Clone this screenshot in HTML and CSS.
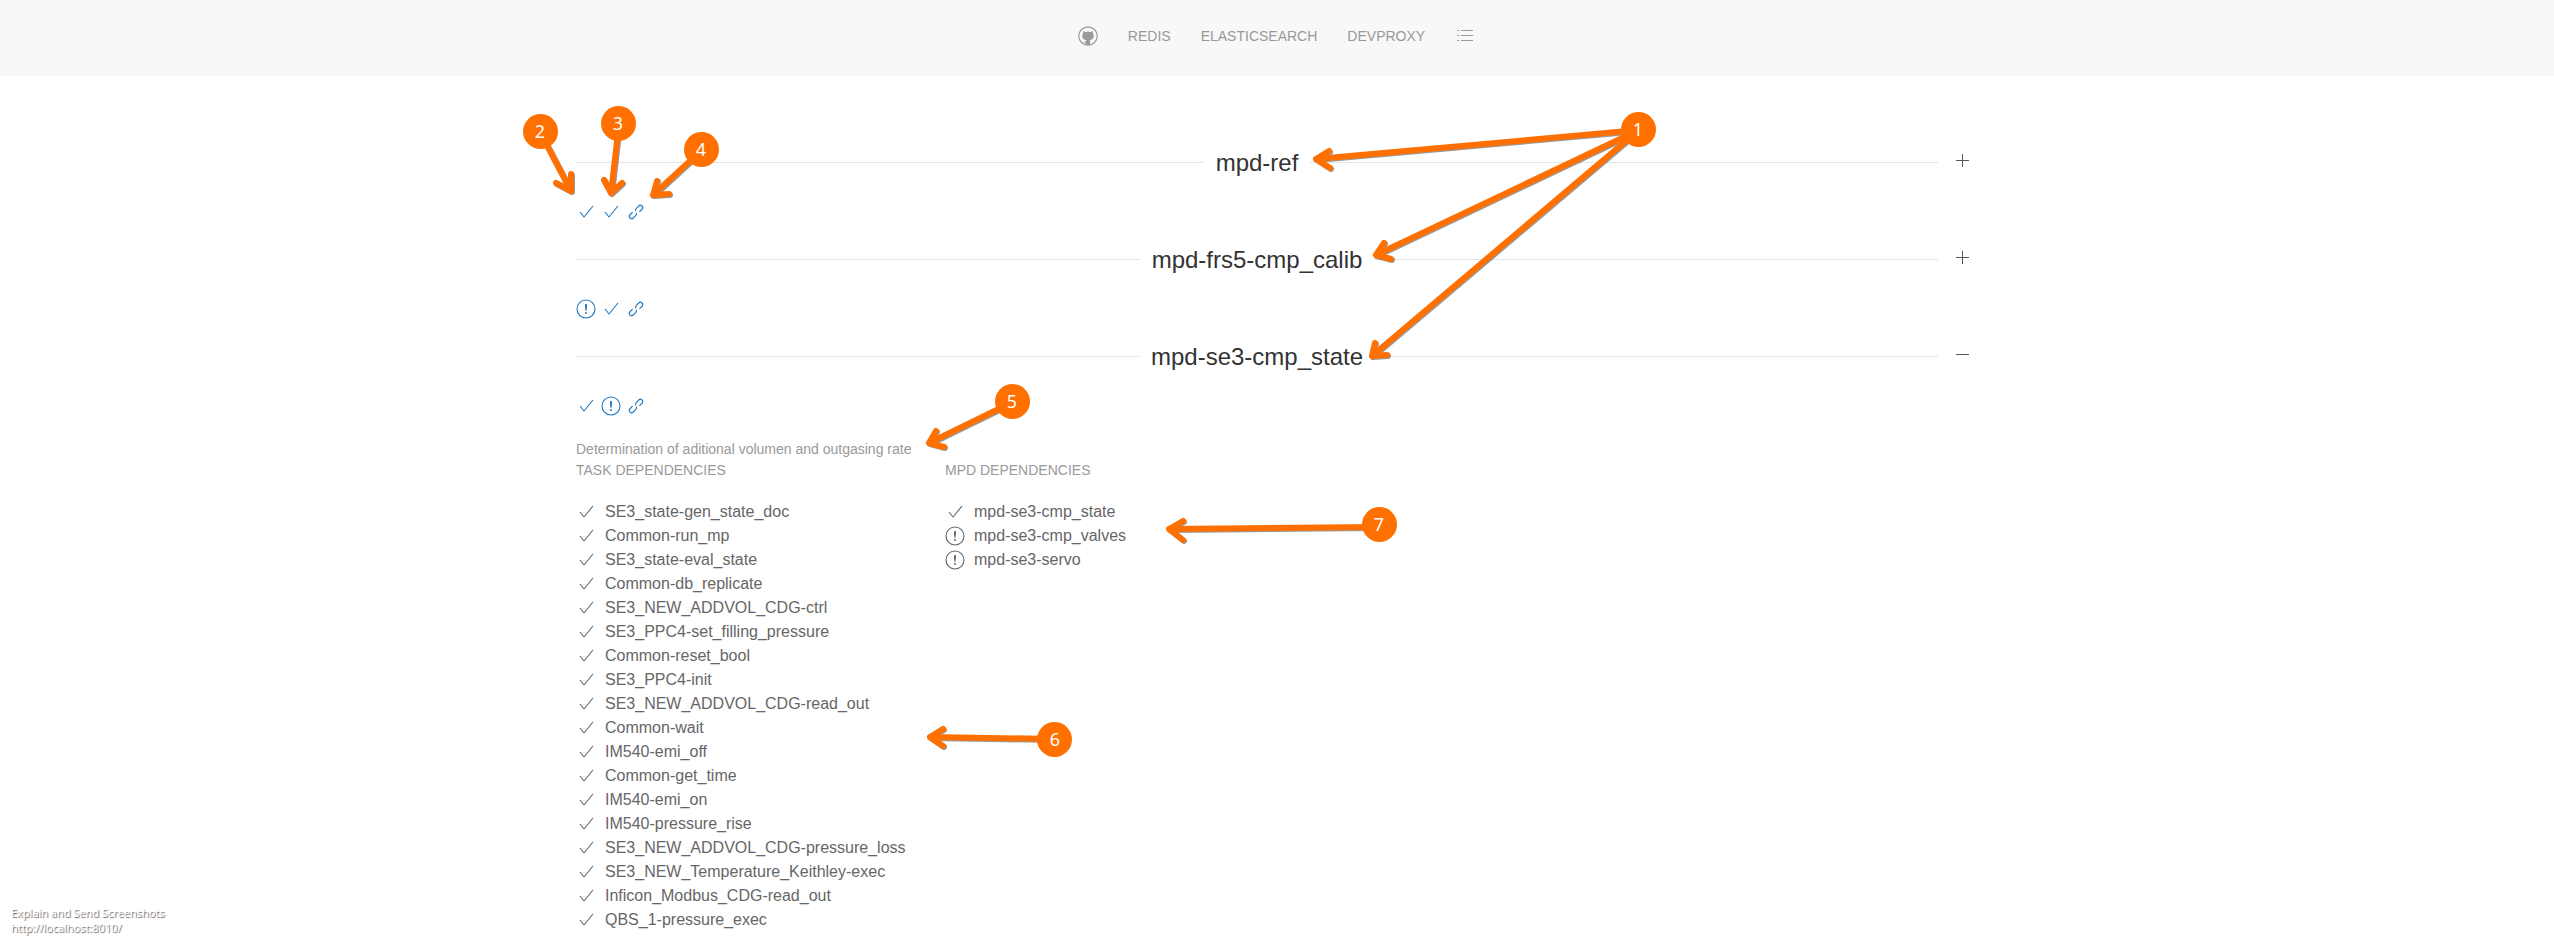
FILE: index.html
```html
<!DOCTYPE html>
<html lang="en">
<head>
<meta charset="utf-8">
<title>Measurement programs</title>
<link rel="stylesheet" href="styles.css">
</head>
<body>
<svg class="defs" aria-hidden="true">
  <symbol id="check" viewBox="0 0 20 20"><polyline fill="none" stroke="currentColor" stroke-width="1.1" points="4,10 8,15 17,4"/></symbol>
  <symbol id="warning" viewBox="0 0 20 20"><circle cx="10" cy="14" r="1" fill="currentColor"/><circle cx="10" cy="10" r="9" fill="none" stroke="currentColor" stroke-width="1.1"/><path fill="currentColor" d="M10.97,7.72 C10.85,9.54 10.56,11.29 10.56,11.29 C10.51,11.87 10.27,12 9.99,12 C9.69,12 9.49,11.87 9.43,11.29 C9.43,11.29 9.16,9.54 9.03,7.72 C8.96,6.54 9.03,6 9.03,6 C9.03,5.45 9.46,5.02 9.99,5 C10.53,5.01 10.97,5.44 10.97,6 C10.97,6 11.04,6.54 10.97,7.72 Z"/></symbol>
  <symbol id="link" viewBox="0 0 20 20"><g fill="none" stroke="currentColor" stroke-width="1.1" transform="rotate(-45 10 10)"><path d="M7.5 7.7H3.8a2.3 2.3 0 0 0 0 4.6h3.7a2.3 2.3 0 0 0 2.1-1.5"/><path d="M12.5 12.3H16.2a2.3 2.3 0 0 0 0-4.6h-3.7a2.3 2.3 0 0 0-2.1 1.5"/></g></symbol>
  <symbol id="github" viewBox="0 0 20 20"><circle cx="10" cy="10" r="9.2" fill="none" stroke="currentColor" stroke-width="1.2"/><path fill="currentColor" d="M7.77,19 L7.76,16.9 C6.3,17.1 5.6,16.2 5.2,15.3 C5.9,15.9 6.9,16.1 7.79,15.6 C7.87,14.6 8.1,14.2 8.36,13.98 C6.36,13.75 4.26,12.98 4.26,9.9 C4.26,8.9 4.61,8.1 5.19,7.5 C5.1,7.2 4.79,6.5 5.28,5.2 C5.28,5.2 6.04,5 7.75,6.1 C8.47,5.9 9.24,5.8 10,5.8 C10.76,5.8 11.53,5.9 12.25,6.1 C13.97,5 14.72,5.2 14.72,5.2 C15.21,6.5 14.9,7.2 14.81,7.5 C15.39,8.1 15.73,8.9 15.73,9.9 C15.73,12.99 13.63,13.75 11.62,13.97 C11.94,14.25 12.23,14.8 12.23,15.64 L12.22,19 Z"/></symbol>
  <symbol id="list" viewBox="0 0 20 20"><path fill="currentColor" d="M6 4h12v1H6zM6 9h12v1H6zM6 14h12v1H6zM2 4h2v1H2zM2 9h2v1H2zM2 14h2v1H2z"/></symbol>
</svg>

<nav class="navbar">
  <a class="nav-link" href="#" aria-label="GitHub"><svg class="icon"><use href="#github"/></svg></a>
  <a class="nav-link" href="#">Redis</a>
  <a class="nav-link" href="#">Elasticsearch</a>
  <a class="nav-link" href="#">Devproxy</a>
  <a class="nav-link" href="#" aria-label="List"><svg class="icon"><use href="#list"/></svg></a>
</nav>

<main class="container">
  <section class="program">
    <button class="program-title" aria-expanded="false"><span class="heading">mpd-ref</span><svg class="toggle" viewBox="0 0 13 13"><path fill="currentColor" d="M0 6h13v1H0zM6 0h1v13H6z"/></svg></button>
    <div class="status">
      <a href="#" aria-label="Tasks ok"><svg class="icon"><use href="#check"/></svg></a>
      <a href="#" aria-label="Dependencies ok"><svg class="icon"><use href="#check"/></svg></a>
      <a href="#" aria-label="Open"><svg class="icon"><use href="#link"/></svg></a>
    </div>
  </section>

  <section class="program">
    <button class="program-title" aria-expanded="false"><span class="heading">mpd-frs5-cmp_calib</span><svg class="toggle" viewBox="0 0 13 13"><path fill="currentColor" d="M0 6h13v1H0zM6 0h1v13H6z"/></svg></button>
    <div class="status">
      <a href="#" aria-label="Tasks warning"><svg class="icon"><use href="#warning"/></svg></a>
      <a href="#" aria-label="Dependencies ok"><svg class="icon"><use href="#check"/></svg></a>
      <a href="#" aria-label="Open"><svg class="icon"><use href="#link"/></svg></a>
    </div>
  </section>

  <section class="program">
    <button class="program-title" aria-expanded="true"><span class="heading">mpd-se3-cmp_state</span><svg class="toggle" viewBox="0 0 13 13"><path fill="currentColor" d="M0 6h13v1H0z"/></svg></button>
    <div class="status">
      <a href="#" aria-label="Tasks ok"><svg class="icon"><use href="#check"/></svg></a>
      <a href="#" aria-label="Dependencies warning"><svg class="icon"><use href="#warning"/></svg></a>
      <a href="#" aria-label="Open"><svg class="icon"><use href="#link"/></svg></a>
    </div>
    <div class="details">
      <p class="meta">Determination of aditional volumen and outgasing rate</p>
      <div class="columns">
        <div>
          <h3 class="meta caps">Task dependencies</h3>
          <ul class="deps">
            <li><svg class="icon"><use href="#check"/></svg>SE3_state-gen_state_doc</li>
            <li><svg class="icon"><use href="#check"/></svg>Common-run_mp</li>
            <li><svg class="icon"><use href="#check"/></svg>SE3_state-eval_state</li>
            <li><svg class="icon"><use href="#check"/></svg>Common-db_replicate</li>
            <li><svg class="icon"><use href="#check"/></svg>SE3_NEW_ADDVOL_CDG-ctrl</li>
            <li><svg class="icon"><use href="#check"/></svg>SE3_PPC4-set_filling_pressure</li>
            <li><svg class="icon"><use href="#check"/></svg>Common-reset_bool</li>
            <li><svg class="icon"><use href="#check"/></svg>SE3_PPC4-init</li>
            <li><svg class="icon"><use href="#check"/></svg>SE3_NEW_ADDVOL_CDG-read_out</li>
            <li><svg class="icon"><use href="#check"/></svg>Common-wait</li>
            <li><svg class="icon"><use href="#check"/></svg>IM540-emi_off</li>
            <li><svg class="icon"><use href="#check"/></svg>Common-get_time</li>
            <li><svg class="icon"><use href="#check"/></svg>IM540-emi_on</li>
            <li><svg class="icon"><use href="#check"/></svg>IM540-pressure_rise</li>
            <li><svg class="icon"><use href="#check"/></svg>SE3_NEW_ADDVOL_CDG-pressure_loss</li>
            <li><svg class="icon"><use href="#check"/></svg>SE3_NEW_Temperature_Keithley-exec</li>
            <li><svg class="icon"><use href="#check"/></svg>Inficon_Modbus_CDG-read_out</li>
            <li><svg class="icon"><use href="#check"/></svg>QBS_1-pressure_exec</li>
          </ul>
        </div>
        <div>
          <h3 class="meta caps">MPD dependencies</h3>
          <ul class="deps">
            <li><svg class="icon"><use href="#check"/></svg>mpd-se3-cmp_state</li>
            <li><svg class="icon"><use href="#warning"/></svg>mpd-se3-cmp_valves</li>
            <li><svg class="icon"><use href="#warning"/></svg>mpd-se3-servo</li>
          </ul>
        </div>
      </div>
    </div>
  </section>
</main>

<svg class="annotations" width="2554" height="940" viewBox="0 0 2554 940">
  <g class="arrows">
    <path d="M1639 130L1316 159M1329 151L1316 159L1330 168"/>
    <path d="M1639 130L1376 255M1384 243L1376 255L1391 259"/>
    <path d="M1639 130L1372 356M1375 343L1372 356L1387 355"/>
    <path d="M540 132L571 191M556 183L571 191L571 174"/>
    <path d="M619 124L611 193M604 180L611 193L622 183"/>
    <path d="M702 150L653 195M657 181L653 195L669 194"/>
    <path d="M1013 402L929 443M936 431L929 443L944 447"/>
    <path d="M1055 739L930 737M943 729L930 737L943 746"/>
    <path d="M1379 527L1169 529M1183 521L1169 529L1183 540"/>
  </g>
  <g class="badges">
    <circle cx="1638.5" cy="129.5" r="17.5"/><circle cx="540.5" cy="131.5" r="17.5"/><circle cx="618.5" cy="123.5" r="17.5"/><circle cx="701.5" cy="149.5" r="17.5"/><circle cx="1012.5" cy="401.5" r="17.5"/><circle cx="1054.5" cy="739.5" r="17.5"/><circle cx="1379.5" cy="524.5" r="17.5"/>
  </g>
  <g class="numbers">
    <text x="1638" y="136">1</text><text x="540" y="138">2</text><text x="618" y="130">3</text><text x="701" y="156">4</text><text x="1012" y="408">5</text><text x="1055" y="746">6</text><text x="1379" y="531">7</text>
  </g>
</svg>
<div class="watermark">Explain and Send Screenshots<br>http://localhost:8010/</div>
</body>
</html>
```
FILE: styles.css
```css
* { box-sizing: border-box; }
body {
  margin: 0;
  min-height: 100vh;
  position: relative;
  background: #fff;
  color: #666;
  font: 16px/24px "Liberation Sans", Arial, sans-serif;
}
.defs { position: absolute; width: 0; height: 0; }
.icon { display: block; flex: none; width: 20px; height: 20px; }

.navbar {
  display: flex;
  justify-content: center;
  align-items: center;
  gap: 30px;
  padding: 15px 16px 19px 15px;
  background: #f8f8f8;
}
.nav-link {
  display: flex;
  align-items: center;
  min-height: 42px;
  color: #999;
  font-size: 14px;
  text-transform: uppercase;
  text-decoration: none;
}

.container {
  max-width: 1402px;
  margin: 0 auto;
  padding: 70px 2px 0 0;
}
.program + .program { margin-top: 20px; }
.program-title {
  display: flex;
  align-items: flex-start;
  gap: 10px;
  width: 100%;
  padding: 0;
  border: 0;
  background: none;
  color: #555;
  font: inherit;
}
.heading {
  display: flex;
  flex: 1;
  align-items: center;
  gap: 12px;
  color: #333;
  font-size: 24px;
  line-height: 34px;
}
.heading::before,
.heading::after {
  content: "";
  flex: 1;
  margin-bottom: 2px;
  border-bottom: 1px solid #e5e5e5;
}
.toggle {
  flex: none;
  width: 28px;
  height: 29px;
  padding: 8px 7px 8px 8px;
  shape-rendering: crispEdges;
}

.status { display: flex; gap: 5px; padding: 22px 0 1px; }
.status a { display: block; color: #1f78be; }

.details { padding-top: 22px; }
.meta {
  margin: 0;
  color: #999;
  font-size: 14px;
  font-weight: normal;
  line-height: 21px;
}
.caps { text-transform: uppercase; }
.columns {
  display: grid;
  grid-template-columns: repeat(4, minmax(0, 1fr));
  column-gap: 76px;
}
.deps {
  margin: 19px 0 0;
  padding: 0;
  list-style: none;
  white-space: nowrap;
}
.deps li { display: flex; align-items: center; gap: 9px; }

.annotations {
  position: absolute;
  top: 0;
  left: 0;
  pointer-events: none;
}
.arrows {
  fill: none;
  stroke: #ff7000;
  stroke-width: 6;
  stroke-linecap: round;
  stroke-linejoin: round;
  filter: drop-shadow(1px 1px 0 #0006);
}
.badges { fill: #ff7000; }
.numbers {
  fill: #fff;
  font-family: "Noto Sans", sans-serif;
  font-size: 18px;
  text-anchor: middle;
}
.watermark {
  position: absolute;
  left: 11px;
  bottom: 12px;
  color: #fff;
  font: 11px/15px "Open Sans", sans-serif;
  text-shadow: 1px 1px 1px #555;
}
```
